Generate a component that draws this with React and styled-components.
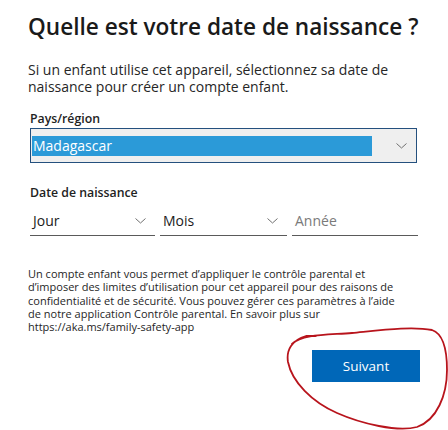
import styled, { createGlobalStyle } from 'styled-components'

const Global = createGlobalStyle`
  body {
    margin: 0;
    background: #fff;
    font-family: 'Open Sans', 'Noto Sans', sans-serif;
    color: #1b1b1b;
  }
`

const Page = styled.div`
  position: relative;
  width: 448px;
  height: 430px;
  box-sizing: border-box;
  padding: 12px 28px 0 28px;
  overflow: hidden;
`

const Title = styled.h1`
  margin: 0;
  font-size: 22.6px;
  font-weight: 600;
  line-height: 30px;
  white-space: nowrap;
  color: #1a1a1a;
`

const Intro = styled.p`
  margin: 19px 0 0;
  font-size: 14px;
  line-height: 17px;
  color: #262626;
`

const Label = styled.div`
  margin-top: ${({ top }) => top}px;
  padding-left: 2px;
  font-size: 12.3px;
  font-weight: 600;
  color: #222;
  line-height: 15px;
`

const Select = styled.div`
  margin: 2px 3px 0 2px;
  height: 33px;
  display: flex;
  align-items: center;
  gap: 24px;
  padding: 0 9px 0 1px;
  border: 1px solid #24507e;
  background: #efefef;
`

const Selected = styled.div`
  flex: 1;
  height: 20px;
  background: #2b9ad8;
  color: #fff;
  font-size: 14px;
  line-height: 20px;
  padding-left: 1px;
`

const Chevron = () => (
  <svg width='11' height='6' viewBox='0 0 11 6'>
    <polyline points='0.5,0.5 5.5,5 10.5,0.5' fill='none' stroke='#707070' strokeWidth='1' />
  </svg>
)

const DateRow = styled.div`
  margin: 11px 0 0 2px;
  display: grid;
  grid-template-columns: 125px 127px 126px;
  column-gap: 5px;
`

const Field = styled.div`
  display: flex;
  align-items: center;
  justify-content: space-between;
  height: 20px;
  padding: 0 9px 4px 3px;
  border-bottom: 1px solid #5a5a5a;
  font-size: 14px;
  line-height: 20px;
  color: ${({ $muted }) => ($muted ? '#7a7a7a' : '#1b1b1b')};
`

const Notice = styled.p`
  margin: 31px 0 0;
  font-size: 11px;
  line-height: 13.3px;
  color: #262626;
  white-space: nowrap;
`

const Footer = styled.div`
  display: flex;
  justify-content: flex-end;
  margin-top: 17px;
`

const Button = styled.button`
  width: 108px;
  height: 32px;
  border: none;
  padding: 0;
  background: #0067b8;
  color: #fff;
  font-family: inherit;
  font-size: 13.5px;
`

const Scribble = styled.svg`
  position: absolute;
  left: 282px;
  top: 320px;
  pointer-events: none;
`

export default function App() {
  return (
    <Page>
      <Global />
      <Title>Quelle est votre date de naissance ?</Title>
      <Intro>
        Si un enfant utilise cet appareil, sélectionnez sa date de
        <br />
        naissance pour créer un compte enfant.
      </Intro>
      <Label top={16}>Pays/région</Label>
      <Select>
        <Selected>Madagascar</Selected>
        <Chevron />
      </Select>
      <Label top={22}>Date de naissance</Label>
      <DateRow>
        <Field>
          Jour
          <Chevron />
        </Field>
        <Field>
          Mois
          <Chevron />
        </Field>
        <Field $muted>Année</Field>
      </DateRow>
      <Notice>
        Un compte enfant vous permet d’appliquer le contrôle parental et
        <br />
        d’imposer des limites d’utilisation pour cet appareil pour des raisons de
        <br />
        confidentialité et de sécurité. Vous pouvez gérer ces paramètres à l’aide
        <br />
        de notre application Contrôle parental. En savoir plus sur
        <br />
        https://aka.ms/family-safety-app
      </Notice>
      <Footer>
        <Button>Suivant</Button>
      </Footer>
      <Scribble width='166' height='110' viewBox='0 0 166 110'>
        <path
          d='M10 24 C 20 14, 45 15, 70 13 C 100 10, 130 6, 150 10 C 162 14, 165 30, 165 50 C 165 75, 155 100, 135 107 C 115 112, 80 104, 55 93 C 30 82, 10 62, 6 42 C 4 30, 10 20, 24 16 L 34 16'
          fill='none'
          stroke='#b8141c'
          strokeWidth='1.8'
          strokeLinecap='round'
          strokeLinejoin='round'
        />
      </Scribble>
    </Page>
  )
}
